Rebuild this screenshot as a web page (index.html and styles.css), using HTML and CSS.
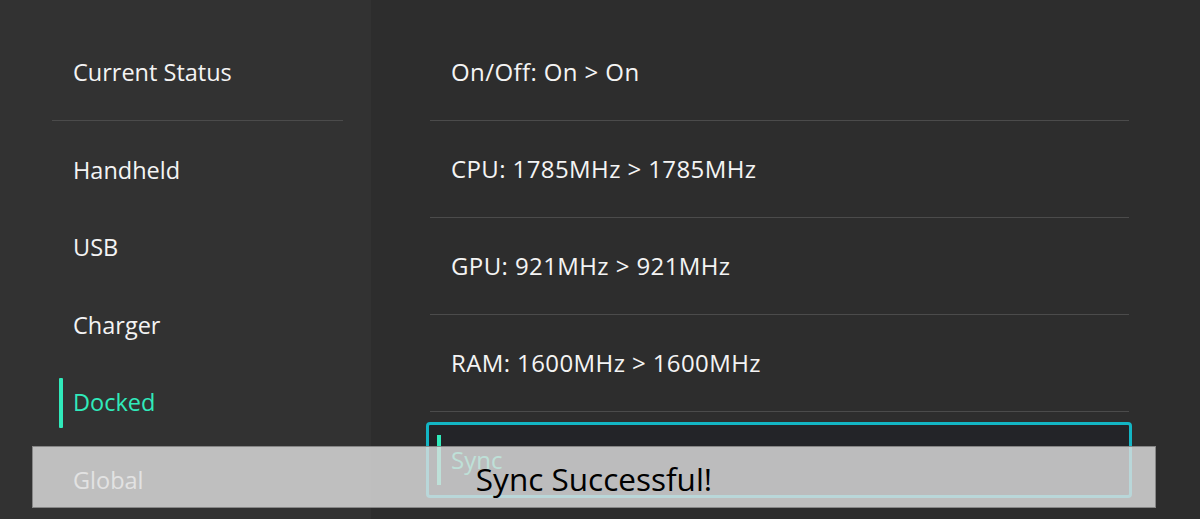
FILE: index.html
```html
<!DOCTYPE html>
<html lang="en">
<head>
<meta charset="utf-8">
<title>Status</title>
<link rel="stylesheet" href="styles.css">
</head>
<body>
<div class="app">
  <nav class="sidebar">
    <div class="side-header"><span class="side-text">Current Status</span></div>
    <ul class="side-list">
      <li class="side-item"><span class="side-text">Handheld</span></li>
      <li class="side-item"><span class="side-text">USB</span></li>
      <li class="side-item"><span class="side-text">Charger</span></li>
      <li class="side-item active"><span class="side-text">Docked</span></li>
      <li class="side-item"><span class="side-text">Global</span></li>
    </ul>
  </nav>
  <main class="content">
    <ul class="rows">
      <li class="row">On/Off: On &gt; On</li>
      <li class="row">CPU: 1785MHz &gt; 1785MHz</li>
      <li class="row">GPU: 921MHz &gt; 921MHz</li>
      <li class="row">RAM: 1600MHz &gt; 1600MHz</li>
      <li class="btn focused">Sync</li>
    </ul>
  </main>
  <div class="toast">Sync Successful!</div>
</div>
</body>
</html>
```
FILE: styles.css
```css
html, body {
  margin: 0;
  padding: 0;
  height: 100%;
}
body {
  background: #2d2d2d;
  font-family: "Open Sans", "Noto Sans", sans-serif;
  color: #f4f4f4;
  overflow: hidden;
}
ul {
  list-style: none;
  margin: 0;
  padding: 0;
}
.app {
  position: relative;
  display: flex;
  width: 1200px;
  height: 519px;
}
.sidebar {
  width: 371px;
  flex: none;
  background: #323232;
  padding: 0 28px 0 52px;
  box-sizing: border-box;
}
.side-header {
  height: 121px;
  box-sizing: border-box;
  padding-top: 57px;
  border-bottom: 1px solid #4b4b4b;
}
.side-text {
  display: block;
  padding-left: 21px;
  font-size: 23.5px;
  line-height: 30px;
}
.side-list {
  padding-top: 10px;
}
.side-item {
  position: relative;
  height: 77.5px;
  display: flex;
  align-items: center;
}
.side-item.active .side-text {
  color: #30eabb;
}
.side-item.active::before {
  content: "";
  position: absolute;
  left: 7px;
  top: 14px;
  width: 4px;
  height: 50px;
  border-radius: 1px;
  background: #30eabb;
}
.content {
  flex: 1;
  padding: 24px 71px 0 59px;
}
.row {
  height: 96px;
  border-bottom: 1px solid #4b4b4b;
  display: flex;
  align-items: center;
  padding-left: 21px;
  font-size: 24px;
  letter-spacing: 0.4px;
  line-height: 30px;
}
.btn {
  position: relative;
  margin: 10px -3px 0 -4px;
  height: 76px;
  box-sizing: border-box;
  border: 3px solid #13b5c4;
  border-radius: 4px;
  background: #232428;
  display: flex;
  align-items: center;
  padding-left: 22px;
  font-size: 24px;
  line-height: 30px;
  color: #30eabb;
}
.btn::before {
  content: "";
  position: absolute;
  left: 8px;
  top: 10px;
  width: 4px;
  height: 50px;
  background: #30eabb;
}
.toast {
  position: absolute;
  left: 32px;
  top: 446px;
  width: 1124px;
  height: 62px;
  box-sizing: border-box;
  background: rgba(222, 222, 222, 0.82);
  border: 1px solid rgba(110, 110, 110, 0.7);
  color: #000;
  font-size: 31.5px;
  display: flex;
  align-items: center;
  justify-content: center;
  padding-top: 2px;
}
```
